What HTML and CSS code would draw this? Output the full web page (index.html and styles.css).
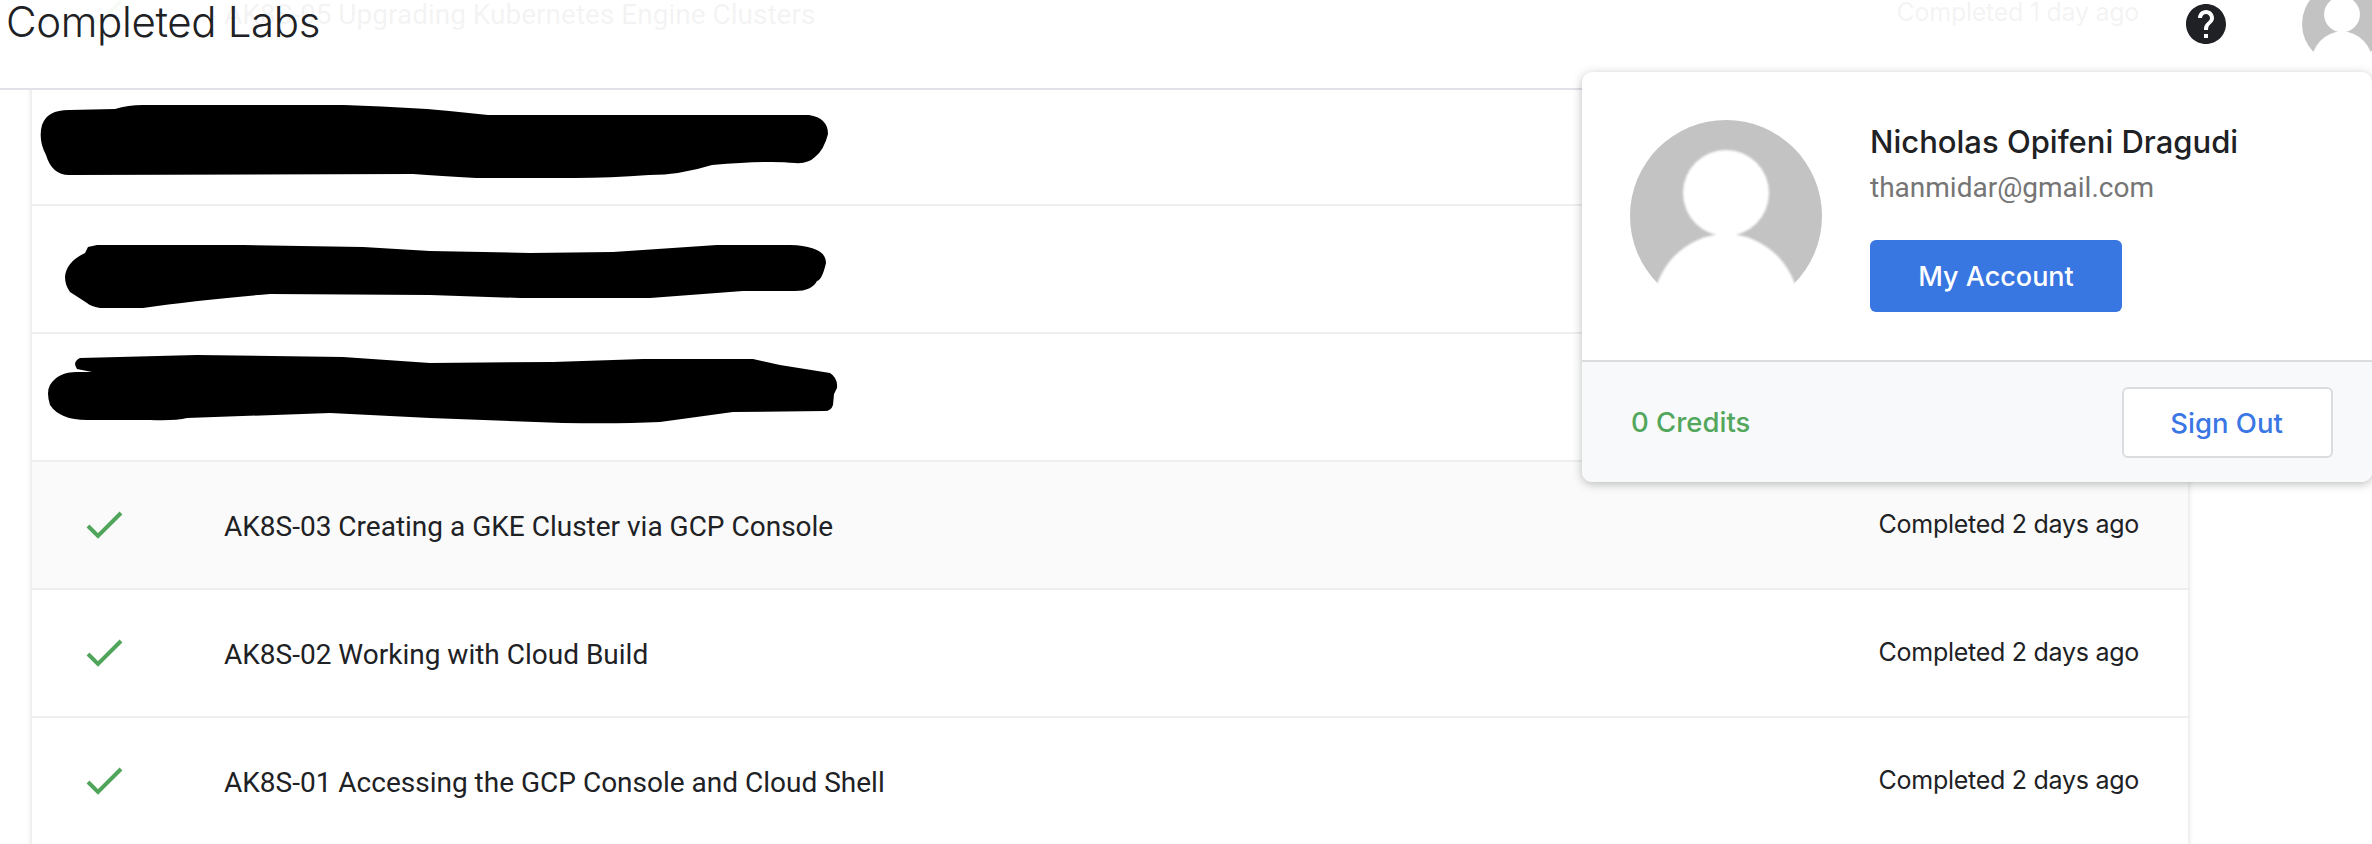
FILE: index.html
```html
<!DOCTYPE html>
<html lang="en">
<head>
<meta charset="utf-8">
<title>Completed Labs</title>
<link rel="stylesheet" href="styles.css">
</head>
<body>
<svg class="defs" width="0" height="0" aria-hidden="true">
  <symbol id="avatar" viewBox="0 0 192 192">
    <circle cx="96" cy="96" r="96" fill="#c3c3c3"/>
    <g class="avatar-figure">
      <circle cx="96" cy="73" r="43" fill="#fff"/>
      <ellipse cx="96" cy="192" rx="74" ry="78" fill="#fff"/>
      <rect x="20" y="170" width="152" height="30" fill="#fff"/>
    </g>
  </symbol>
  <symbol id="check" viewBox="0 0 40 40">
    <path d="M4 21 L14 31 L37 8" fill="none" stroke="#51a55b" stroke-width="4"/>
  </symbol>
</svg>

<main class="card">
  <div class="row">
    <svg class="check"><use href="#check"/></svg>
    <span class="lab-title">AK8S-05 Upgrading Kubernetes Engine Clusters</span>
    <span class="lab-date">Completed 1 day ago</span>
  </div>
  <div class="row">
    <svg class="scribble" viewBox="32 78 830 126"><path d="M69 110 L115 109 Q128 105 143 105 L344 105 Q420 107 488 115 L809 115 Q828 118 828 134 Q824 150 815 157 Q808 164 795 163 Q769 160 712 165 Q680 175 649 175 Q610 178 574 178 L476 178 Q440 176 413 174 L69 175 Q52 175 46 155 Q38 140 42 125 Q47 110 69 110Z"/></svg>
  </div>
  <div class="row">
    <svg class="scribble" viewBox="32 206 830 126"><path d="M97 245 L243 245 L363 247 L430 251 L530 253 L613 252 L717 245 L790 245 Q826 246 826 263 Q822 280 817 281 Q812 291 795 291 L743 291 L650 298 L520 298 L430 295 L270 294 Q197 300 143 308 L100 308 Q90 306 87 303 L70 292 Q65 285 65 277 Q66 262 85 253 L88 247 Z"/></svg>
  </div>
  <div class="row">
    <svg class="scribble" viewBox="32 334 830 126"><path d="M80 358 L197 355 L343 357 L430 363 L553 362 L643 359 L753 359 L780 365 L830 373 Q838 378 837 388 L834 394 L833 405 Q831 411 825 411 L733 412 L660 422 Q620 424 563 423 L430 418 L330 413 L187 418 Q175 421 150 420 L87 420 Q60 420 50 405 Q46 392 50 385 Q58 372 77 372 L92 372 L77 369 Q72 362 80 358 Z"/></svg>
  </div>
  <div class="row row-hover">
    <svg class="check"><use href="#check"/></svg>
    <span class="lab-title">AK8S-03 Creating a GKE Cluster via GCP Console</span>
    <span class="lab-date">Completed 2 days ago</span>
  </div>
  <div class="row">
    <svg class="check"><use href="#check"/></svg>
    <span class="lab-title">AK8S-02 Working with Cloud Build</span>
    <span class="lab-date">Completed 2 days ago</span>
  </div>
  <div class="row">
    <svg class="check"><use href="#check"/></svg>
    <span class="lab-title">AK8S-01 Accessing the GCP Console and Cloud Shell</span>
    <span class="lab-date">Completed 2 days ago</span>
  </div>
</main>

<header class="topbar">
  <h1 class="page-title">Completed Labs</h1>
  <svg class="help" viewBox="0 0 24 24"><path fill="#202124" d="M12 2C6.48 2 2 6.48 2 12s4.48 10 10 10 10-4.48 10-10S17.52 2 12 2zm1 17h-2v-2h2v2zm2.07-7.75l-.9.92C13.45 12.9 13 13.5 13 15h-2v-.5c0-1.1.45-2.1 1.17-2.83l1.24-1.26c.37-.36.59-.86.59-1.41 0-1.1-.9-2-2-2s-2 .9-2 2H8c0-2.21 1.79-4 4-4s4 1.79 4 4c0 .88-.36 1.68-.93 2.25z"/></svg>
  <svg class="topbar-avatar"><use href="#avatar"/></svg>
</header>

<aside class="account">
  <div class="account-main">
    <svg class="account-avatar"><use href="#avatar"/></svg>
    <div class="account-info">
      <div class="account-name">Nicholas Opifeni Dragudi</div>
      <div class="account-email">thanmidar@gmail.com</div>
      <a class="btn-primary">My Account</a>
    </div>
  </div>
  <div class="account-foot">
    <span class="credits">0 Credits</span>
    <a class="btn-outline">Sign Out</a>
  </div>
</aside>
</body>
</html>
```

FILE: styles.css
```css
* { box-sizing: border-box; }
html, body { margin: 0; height: 844px; overflow: hidden; background: #fff; }
body { position: relative; font-family: "Inter", sans-serif; color: #202124; }
.defs { position: absolute; }
.avatar-figure { filter: blur(1px); }

.card {
  margin: -50px 0 0 32px;
  width: 2156px;
  background: #fff;
  box-shadow: 0 0 5px 1px rgba(0, 0, 0, .12);
}
.row {
  display: flex;
  align-items: center;
  height: 128px;
  padding-right: 49px;
  border-bottom: 2px solid #eee;
}
.row-hover { background: #fafafa; }
.check { flex: none; width: 40px; height: 40px; margin: 0 100px 0 52px; }
.scribble { flex: none; width: 830px; height: 126px; fill: #000; }
.lab-title { margin-top: 4px; font: 400 28px/36px "Roboto", sans-serif; }
.lab-date { margin: 0 0 3px auto; font-size: 25px; line-height: 32px; letter-spacing: -.27px; }

.topbar {
  position: absolute;
  top: 0; left: 0; right: 0;
  height: 90px;
  display: flex;
  align-items: flex-start;
  overflow: hidden;
  background: rgba(255, 255, 255, .95);
  border-bottom: 2px solid #e0e0e6;
}
.page-title {
  margin: 0 auto 0 6px;
  font-size: 42px;
  font-weight: 350;
  line-height: 44px;
  letter-spacing: -.35px;
}
.help { flex: none; width: 48px; height: 48px; }
.topbar-avatar { flex: none; width: 80px; height: 80px; margin: -16px -10px 0 72px; }

.account {
  position: absolute;
  top: 72px; left: 1582px; right: 0;
  height: 410px;
  background: #fff;
  border-radius: 10px;
  overflow: hidden;
  box-shadow: 0 2px 10px rgba(60, 64, 67, .35);
}
.account-main { display: flex; height: 290px; padding: 48px 0 0 48px; border-bottom: 2px solid #dadce0; }
.account-avatar { flex: none; width: 192px; height: 192px; margin-right: 48px; }
.account-info { display: flex; flex-direction: column; align-items: flex-start; }
.account-name { margin-top: 2px; font-size: 31px; font-weight: 500; line-height: 40px; white-space: nowrap; }
.account-email { margin-top: 8px; font: 400 28px/36px "Roboto", sans-serif; color: #757575; }
.btn-primary {
  display: flex; align-items: center; justify-content: center;
  width: 252px; height: 72px;
  margin-top: 34px;
  border-radius: 6px;
  background: #3876e1;
  color: #fff;
  font-size: 27px;
  font-weight: 500;
}
.account-foot {
  display: flex; align-items: center; justify-content: space-between;
  height: 120px;
  padding: 0 39px 0 49px;
  background: #f7f9fb;
}
.credits { color: #52a75c; font-size: 27.5px; font-weight: 500; }
.btn-outline {
  display: flex; align-items: center; justify-content: center;
  width: 211px; height: 71px;
  padding: 2px 2px 0 0;
  border: 2px solid #dadce0;
  border-radius: 6px;
  background: #fff;
  color: #3a77e4;
  font-size: 27.5px;
  font-weight: 500;
}
```
